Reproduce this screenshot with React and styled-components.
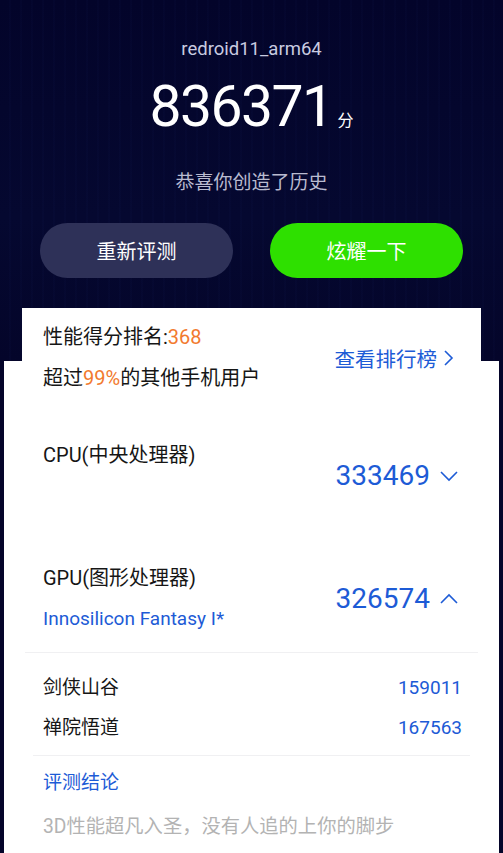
import React from "react";
import styled, { createGlobalStyle } from "styled-components";

const Global = createGlobalStyle`
  html, body { margin: 0; padding: 0; background: #04052a; }
  body { font-family: Roboto, "Noto Sans CJK SC", sans-serif; width: 503px; height: 853px; overflow: hidden; }
`;

const Page = styled.div`
  width: 503px;
  height: 853px;
  display: flex;
  flex-direction: column;
  background: #04052a;
`;

const Header = styled.header`
  height: 361px;
  flex-shrink: 0;
  display: flex;
  flex-direction: column;
  align-items: center;
  padding-top: 38px;
  box-sizing: border-box;
  background:
    repeating-linear-gradient(90deg, rgba(40,50,120,0.0) 0px, rgba(40,50,120,0.0) 9px, rgba(40,60,140,0.08) 10px, rgba(40,50,120,0.0) 11px),
    linear-gradient(180deg, #03042a 0%, #050830 60%, #04052a 100%);
`;

const Device = styled.div`
  font-size: 18.5px;
  line-height: 22px;
  color: #c9cbe0;
`;

const ScoreRow = styled.div`
  margin-top: 17px;
  display: flex;
  align-items: baseline;
  color: #fff;
`;

const Score = styled.span`
  font-size: 57px;
  line-height: 60px;
  letter-spacing: -1.5px;
`;

const Unit = styled.span`
  font-size: 16px;
  margin-left: 5px;
`;

const Congrats = styled.div`
  margin-top: 34px;
  font-size: 19px;
  line-height: 24px;
  color: #b9bbd0;
`;

const Buttons = styled.div`
  margin-top: 28px;
  display: flex;
  gap: 37px;
`;

const Pill = styled.button`
  width: 193px;
  height: 55px;
  border: none;
  border-radius: 28px;
  background: ${(p) => (p.$primary ? "#2ee000" : "#2e3158")};
  color: #fff;
  font-family: Roboto, "Noto Sans CJK SC", sans-serif;
  font-size: 20px;
  padding: 0;
`;

const Body = styled.main`
  flex: 1;
  margin: 0 4px;
  background: #fff;
  display: flex;
  flex-direction: column;
`;

const RankCard = styled.section`
  margin: -53px 18px 0;
  background: #fff;
  padding: 17px 27px 0 21px;
  display: flex;
  align-items: center;
  justify-content: space-between;
`;

const Stack = styled.div`
  display: flex;
  flex-direction: column;
  gap: 17px;
`;

const Line = styled.div`
  font-size: 20px;
  line-height: 24px;
  height: 24px;
  color: ${(p) => p.$color || "#161616"};
  white-space: nowrap;
`;

const SubLine = styled(Line)`
  font-size: 19px;
`;

const Orange = styled.span`
  color: #f27a2e;
`;

const Link = styled.div`
  display: flex;
  align-items: center;
  gap: 6px;
  font-size: 20.5px;
  color: #1d5bd6;
`;

const Block = styled.section`
  margin-top: ${(p) => p.$top}px;
  padding: 0 41px 0 39px;
  display: flex;
  align-items: center;
  justify-content: space-between;
`;

const Value = styled.div`
  display: flex;
  align-items: center;
  gap: 10px;
  font-size: 28px;
  color: #1d5bd6;
`;

const Divider = styled.hr`
  border: none;
  height: 1px;
  background: #f0f0f2;
  margin: ${(p) => p.$top}px ${(p) => p.$side}px 0;
`;

const Rows = styled.div`
  margin-top: 23px;
  padding: 0 37px 0 39px;
  display: flex;
  flex-direction: column;
  gap: 16px;
`;

const Row = styled.div`
  display: flex;
  justify-content: space-between;
  font-size: 19px;
  line-height: 24px;
  color: #161616;
`;

const RowValue = styled.span`
  color: #1d5bd6;
`;

const Conclusion = styled.div`
  margin-top: 15px;
  padding-left: 39px;
  font-size: 19px;
  line-height: 24px;
  color: #1d5bd6;
`;

const Verdict = styled.div`
  margin-top: 20px;
  padding-left: 39px;
  font-size: 19.3px;
  line-height: 24px;
  color: #b3b3b3;
`;

const Chevron = ({ dir }) => {
  const pts =
    dir === "right" ? "2,1 9,8 2,15" : dir === "down" ? "1,2 9,10 17,2" : "1,10 9,2 17,10";
  const w = dir === "right" ? 11 : 18;
  const h = dir === "right" ? 16 : 12;
  return (
    <svg width={w} height={h} viewBox={`0 0 ${w} ${h}`}>
      <polyline points={pts} fill="none" stroke="#1d5bd6" strokeWidth="1.6" />
    </svg>
  );
};

export default function App() {
  return (
    <Page>
      <Global />
      <Header>
        <Device>redroid11_arm64</Device>
        <ScoreRow>
          <Score>836371</Score>
          <Unit>分</Unit>
        </ScoreRow>
        <Congrats>恭喜你创造了历史</Congrats>
        <Buttons>
          <Pill>重新评测</Pill>
          <Pill $primary>炫耀一下</Pill>
        </Buttons>
      </Header>
      <Body>
        <RankCard>
          <Stack>
            <Line>
              性能得分排名:<Orange>368</Orange>
            </Line>
            <Line>
              超过<Orange>99%</Orange>的其他手机用户
            </Line>
          </Stack>
          <Link>
            查看排行榜
            <Chevron dir="right" />
          </Link>
        </RankCard>
        <Block $top={53}>
          <Stack>
            <Line>CPU(中央处理器)</Line>
            <Line />
          </Stack>
          <Value>
            333469
            <Chevron dir="down" />
          </Value>
        </Block>
        <Block $top={58}>
          <Stack>
            <Line>GPU(图形处理器)</Line>
            <SubLine $color="#1d5bd6">Innosilicon Fantasy I*</SubLine>
          </Stack>
          <Value>
            326574
            <Chevron dir="up" />
          </Value>
        </Block>
        <Divider $top={21} $side={21} />
        <Rows>
          <Row>
            <span>剑侠山谷</span>
            <RowValue>159011</RowValue>
          </Row>
          <Row>
            <span>禅院悟道</span>
            <RowValue>167563</RowValue>
          </Row>
        </Rows>
        <Divider $top={15} $side={29} />
        <Conclusion>评测结论</Conclusion>
        <Verdict>3D性能超凡入圣，没有人追的上你的脚步</Verdict>
      </Body>
    </Page>
  );
}
